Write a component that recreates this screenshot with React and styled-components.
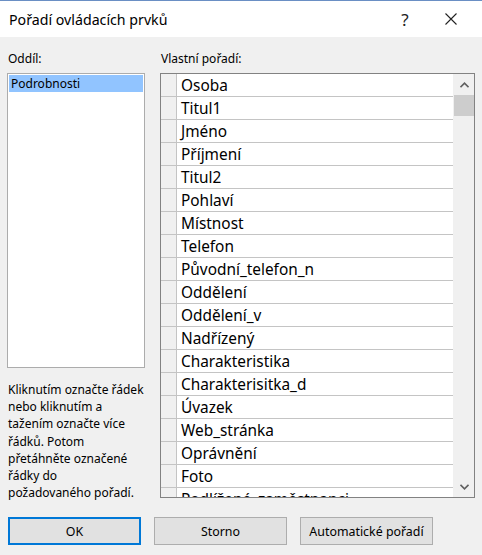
import React from 'react';
import styled, { createGlobalStyle } from 'styled-components';

const Global = createGlobalStyle`
  html, body {
    margin: 0;
    padding: 0;
    background: #f0f0f0;
  }
  body {
    font-family: "Noto Sans", "Open Sans", sans-serif;
    color: #000;
  }
`;

const Window = styled.div`
  width: 482px;
  height: 555px;
  background: #f0f0f0;
  display: flex;
  flex-direction: column;
  overflow: hidden;
`;

const TitleBar = styled.div`
  height: 36px;
  background: #fff;
  border-top: 1px solid #6a8fc4;
  display: flex;
  align-items: center;
  padding-left: 9px;
`;

const Title = styled.div`
  flex: 1;
  font-size: 14.2px;
`;

const TitleButton = styled.div`
  width: ${({ w }) => w}px;
  display: flex;
  justify-content: center;
  align-items: center;
  font-size: 17px;
  color: #222;
`;

const Body = styled.div`
  display: flex;
  gap: 15px;
  padding: 14px 0 0 7px;
`;

const Column = styled.div`
  width: ${({ w }) => w}px;
  display: flex;
  flex-direction: column;
`;

const Label = styled.div`
  font-size: 12px;
  line-height: 16px;
  height: 22px;
  padding-left: 1px;
`;

const ListBox = styled.div`
  height: 291px;
  background: #fff;
  border: 1px solid #acacac;
  padding: 1px;
`;

const ListItem = styled.div`
  height: 17px;
  background: ${({ selected }) => (selected ? '#91c4ff' : 'transparent')};
  font-size: 12px;
  line-height: 17px;
  padding-left: 2px;
`;

const Help = styled.div`
  margin-top: 13px;
  font-size: 12px;
  line-height: 17.2px;
  padding-left: 1px;
`;

const Grid = styled.div`
  height: 423px;
  border: 1px solid #828282;
  background: #fff;
  display: flex;
  overflow: hidden;
`;

const Rows = styled.div`
  flex: 1;
  overflow: hidden;
`;

const Row = styled.div`
  display: flex;
  height: 22px;
  border-bottom: 1px solid #c4c4c4;
`;

const RowHead = styled.div`
  width: 15px;
  background: #f0f0f0;
  border-right: 1px solid #c4c4c4;
`;

const Cell = styled.div`
  flex: 1;
  height: 22px;
  padding-left: 4px;
  font-size: 15.4px;
  line-height: 24px;
  white-space: nowrap;
  overflow: hidden;
`;

const ScrollBar = styled.div`
  width: 20px;
  background: #f0f0f0;
  display: flex;
  flex-direction: column;
  border-left: 1px solid #f0f0f0;
`;

const Arrow = styled.div`
  height: 21px;
  display: flex;
  align-items: center;
  justify-content: center;
`;

const Thumb = styled.div`
  height: 21px;
  background: #cdcdcd;
`;

const Track = styled.div`
  flex: 1;
`;

const Buttons = styled.div`
  display: flex;
  gap: 13px;
  padding: 16px 0 0 8px;
`;

const Button = styled.div`
  width: 133px;
  height: 28px;
  box-sizing: border-box;
  background: #e1e1e1;
  border: ${({ primary }) => (primary ? '2px solid #0078d7' : '1px solid #adadad')};
  display: flex;
  align-items: center;
  justify-content: center;
  font-size: 12.4px;
`;

const Chevron = ({ down }) => (
  <svg width="9" height="6" viewBox="0 0 9 6">
    <path
      d={down ? 'M0.5 0.8 L4.5 4.8 L8.5 0.8' : 'M0.5 5.2 L4.5 1.2 L8.5 5.2'}
      fill="none"
      stroke="#606060"
      strokeWidth="1.6"
    />
  </svg>
);

const fields = [
  'Osoba',
  'Titul1',
  'Jméno',
  'Příjmení',
  'Titul2',
  'Pohlaví',
  'Místnost',
  'Telefon',
  'Původní_telefon_n',
  'Oddělení',
  'Oddělení_v',
  'Nadřízený',
  'Charakteristika',
  'Charakterisitka_d',
  'Úvazek',
  'Web_stránka',
  'Oprávnění',
  'Foto',
  'Podlížené_zaměstnanci',
];

export default function App() {
  return (
    <Window>
      <Global />
      <TitleBar>
        <Title>Pořadí ovládacích prvků</Title>
        <TitleButton w={46}>?</TitleButton>
        <TitleButton w={46}>
          <svg width="12" height="12" viewBox="0 0 12 12">
            <path d="M0.5 0.5 L11.5 11.5 M11.5 0.5 L0.5 11.5" stroke="#222" strokeWidth="1.1" />
          </svg>
        </TitleButton>
        <div style={{ width: 8 }} />
      </TitleBar>
      <Body>
        <Column w={138}>
          <Label>Oddíl:</Label>
          <ListBox>
            <ListItem selected>Podrobnosti</ListItem>
          </ListBox>
          <Help>
            Kliknutím označte řádek
            <br />
            nebo kliknutím a
            <br />
            tažením označte více
            <br />
            řádků. Potom
            <br />
            přetáhněte označené
            <br />
            řádky do
            <br />
            požadovaného pořadí.
          </Help>
        </Column>
        <Column w={315}>
          <Label>Vlastní pořadí:</Label>
          <Grid>
            <Rows>
              {fields.map(f => (
                <Row key={f}>
                  <RowHead />
                  <Cell>{f}</Cell>
                </Row>
              ))}
            </Rows>
            <ScrollBar>
              <Arrow>
                <Chevron />
              </Arrow>
              <Thumb />
              <Track />
              <Arrow>
                <Chevron down />
              </Arrow>
            </ScrollBar>
          </Grid>
        </Column>
      </Body>
      <Buttons>
        <Button primary>OK</Button>
        <Button>Storno</Button>
        <Button>Automatické pořadí</Button>
      </Buttons>
    </Window>
  );
}
